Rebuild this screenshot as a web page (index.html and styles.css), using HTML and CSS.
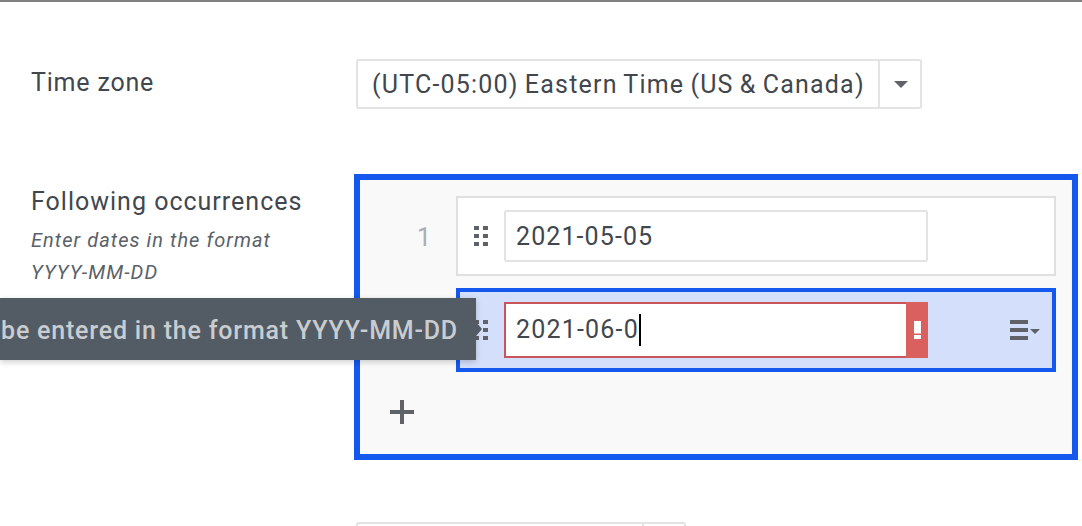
FILE: index.html
```html
<!DOCTYPE html>
<html lang="en">
<head>
<meta charset="utf-8">
<title>Schedule</title>
<link rel="stylesheet" href="styles.css">
</head>
<body>
<main class="form">
  <div class="field field-zone">
    <div class="label-col"><div class="label">Time zone</div></div>
    <div class="select select-zone">
      <span class="select-value">(UTC-05:00) Eastern Time (US &amp; Canada)</span>
      <span class="select-btn"><span class="caret"></span></span>
    </div>
  </div>
  <div class="field field-occ">
    <div class="label-col">
      <div class="label">Following occurrences</div>
      <div class="hint">Enter dates in the format<br>YYYY-MM-DD</div>
    </div>
    <div class="panel">
      <div class="list-row">
        <span class="row-num">1</span>
        <div class="row-box">
          <svg class="grip" width="14" height="20" viewBox="0 0 14 20"><path fill="#5f6266" d="M0 0h5v4H0zM9 0h5v4H9zM0 8h5v4H0zM9 8h5v4H9zM0 16h5v4H0zM9 16h5v4H9z"/></svg>
          <div class="date-input">2021-05-05</div>
        </div>
      </div>
      <div class="list-row">
        <span class="row-num"></span>
        <div class="row-box row-active">
          <svg class="grip" width="14" height="20" viewBox="0 0 14 20"><path fill="#5f6266" d="M0 0h5v4H0zM9 0h5v4H9zM0 8h5v4H0zM9 8h5v4H9zM0 16h5v4H0zM9 16h5v4H9z"/></svg>
          <div class="date-input date-error">
            <span class="date-text">2021-06-0<span class="cursor"></span></span>
            <span class="error-flag"><svg width="7" height="18" viewBox="0 0 7 18"><path fill="#fff" d="M0 0h7v12.500H0zM0 14h7v4H0z"/></svg></span>
          </div>
          <svg class="row-menu" width="30" height="20" viewBox="0 0 30 20"><path fill="#5f6266" d="M0 0h18v4H0zM0 8h18v4H0zM0 16h18v4H0z"/><path fill="#5f6266" d="M20 9h10l-5 5z"/></svg>
        </div>
      </div>
      <button class="add-btn" type="button" aria-label="Add">
        <svg width="24" height="24" viewBox="0 0 24 24"><path fill="#5f6266" d="M10 0h4v10h10v4H14v10h-4V14H0v-4h10z"/></svg>
      </button>
    </div>
  </div>
  <div class="field field-next">
    <div class="label-col"></div>
    <div class="select select-next">
      <span class="select-value"></span>
      <span class="select-btn"></span>
    </div>
  </div>
</main>
<div class="tooltip">be entered in the format YYYY-MM-DD</div>
</body>
</html>
```
FILE: styles.css
```css
* { box-sizing: border-box; }
html, body { margin: 0; height: 100%; overflow: hidden; }
body {
  position: relative;
  background: #fff;
  color: #41474d;
  font-family: Roboto, "Noto Sans", sans-serif;
  font-size: 25px;
  letter-spacing: 1px;
  border-top: 2px solid #808080;
}
.form { padding: 57px 4px 0 31px; }
.field { display: flex; align-items: flex-start; }
.field-occ { margin-top: 65px; }
.field-next { margin-top: 62px; }
.label-col { width: 323px; flex: none; }
.label { line-height: 32px; color: #41474d; }
.field-zone .label { line-height: 48px; letter-spacing: .8px; }
.field-occ .label-col { padding-top: 12px; }
.hint {
  margin-top: 6px;
  font-size: 20px;
  font-style: italic;
  line-height: 32px;
  letter-spacing: 1.05px;
  color: #5a6168;
}
.select {
  display: flex;
  margin-left: 2px;
  height: 50px;
  background: #fff;
  border: 2px solid #e3e3e3;
  border-radius: 3px;
}
.select-zone { width: 566px; }
.select-next { width: 330px; }
.select-value {
  flex: 1;
  padding-left: 14px;
  line-height: 48px;
  white-space: nowrap;
  letter-spacing: 1.2px;
  word-spacing: -1.25px;
}
.select-btn {
  width: 42px;
  flex: none;
  display: flex;
  align-items: center;
  justify-content: center;
  border-left: 2px solid #e3e3e3;
}
.caret {
  width: 0;
  height: 0;
  margin-left: 2px;
  border: 7px solid transparent;
  border-top: 7px solid #5f6266;
  border-bottom: 0;
}
.panel {
  width: 724px;
  height: 286px;
  padding: 16px 16px 0 0;
  background: #f9f9f9;
  border: 6px solid #1558ee;
}
.list-row { display: flex; align-items: stretch; }
.list-row + .list-row { margin-top: 12px; }
.row-num {
  width: 96px;
  flex: none;
  align-self: center;
  padding: 3px 24px 0 0;
  text-align: right;
  color: #a9adb3;
}
.row-box {
  flex: 1;
  display: flex;
  align-items: center;
  height: 80px;
  padding-left: 16px;
  background: #fff;
  border: 2px solid #e0e0e0;
}
.row-active {
  height: 84px;
  padding-left: 14px;
  background: #d4dffb;
  border: 4px solid #1558ee;
}
.grip { flex: none; }
.date-input {
  display: flex;
  width: 424px;
  height: 52px;
  margin-left: 16px;
  padding-left: 10px;
  background: #fff;
  border: 2px solid #e3e3e3;
  border-radius: 3px;
  line-height: 50px;
  letter-spacing: 1.1px;
}
.date-error {
  height: 56px;
  padding-left: 10px;
  border: 2px solid #c9545c;
  border-right: 0;
  border-radius: 0;
  line-height: 50px;
  letter-spacing: 1.2px;
  justify-content: space-between;
}
.date-text { display: flex; align-items: center; }
.cursor {
  width: 2px;
  height: 32px;
  background: #000;
}
.error-flag {
  width: 22px;
  margin: -2px 0;
  display: flex;
  align-items: center;
  justify-content: center;
  background: #d9605f;
}
.row-menu { flex: none; margin-left: 82px; }
.add-btn {
  display: block;
  margin: 28px 0 0 30px;
  padding: 0;
  border: 0;
  background: none;
  line-height: 0;
}
.tooltip {
  position: absolute;
  top: 296px;
  left: 0;
  width: 476px;
  height: 62px;
  padding: 2px 18px 0 0;
  line-height: 62px;
  text-align: right;
  white-space: nowrap;
  font-weight: 500;
  letter-spacing: .8px;
  color: #c9ccd0;
  background: #535c64;
  box-shadow: 0 2px 6px rgba(0,0,0,.2);
}
.tooltip::after {
  content: "";
  position: absolute;
  top: 24px;
  left: 100%;
  border: 7px solid transparent;
  border-left: 6px solid #535c64;
  border-right: 0;
}
```
